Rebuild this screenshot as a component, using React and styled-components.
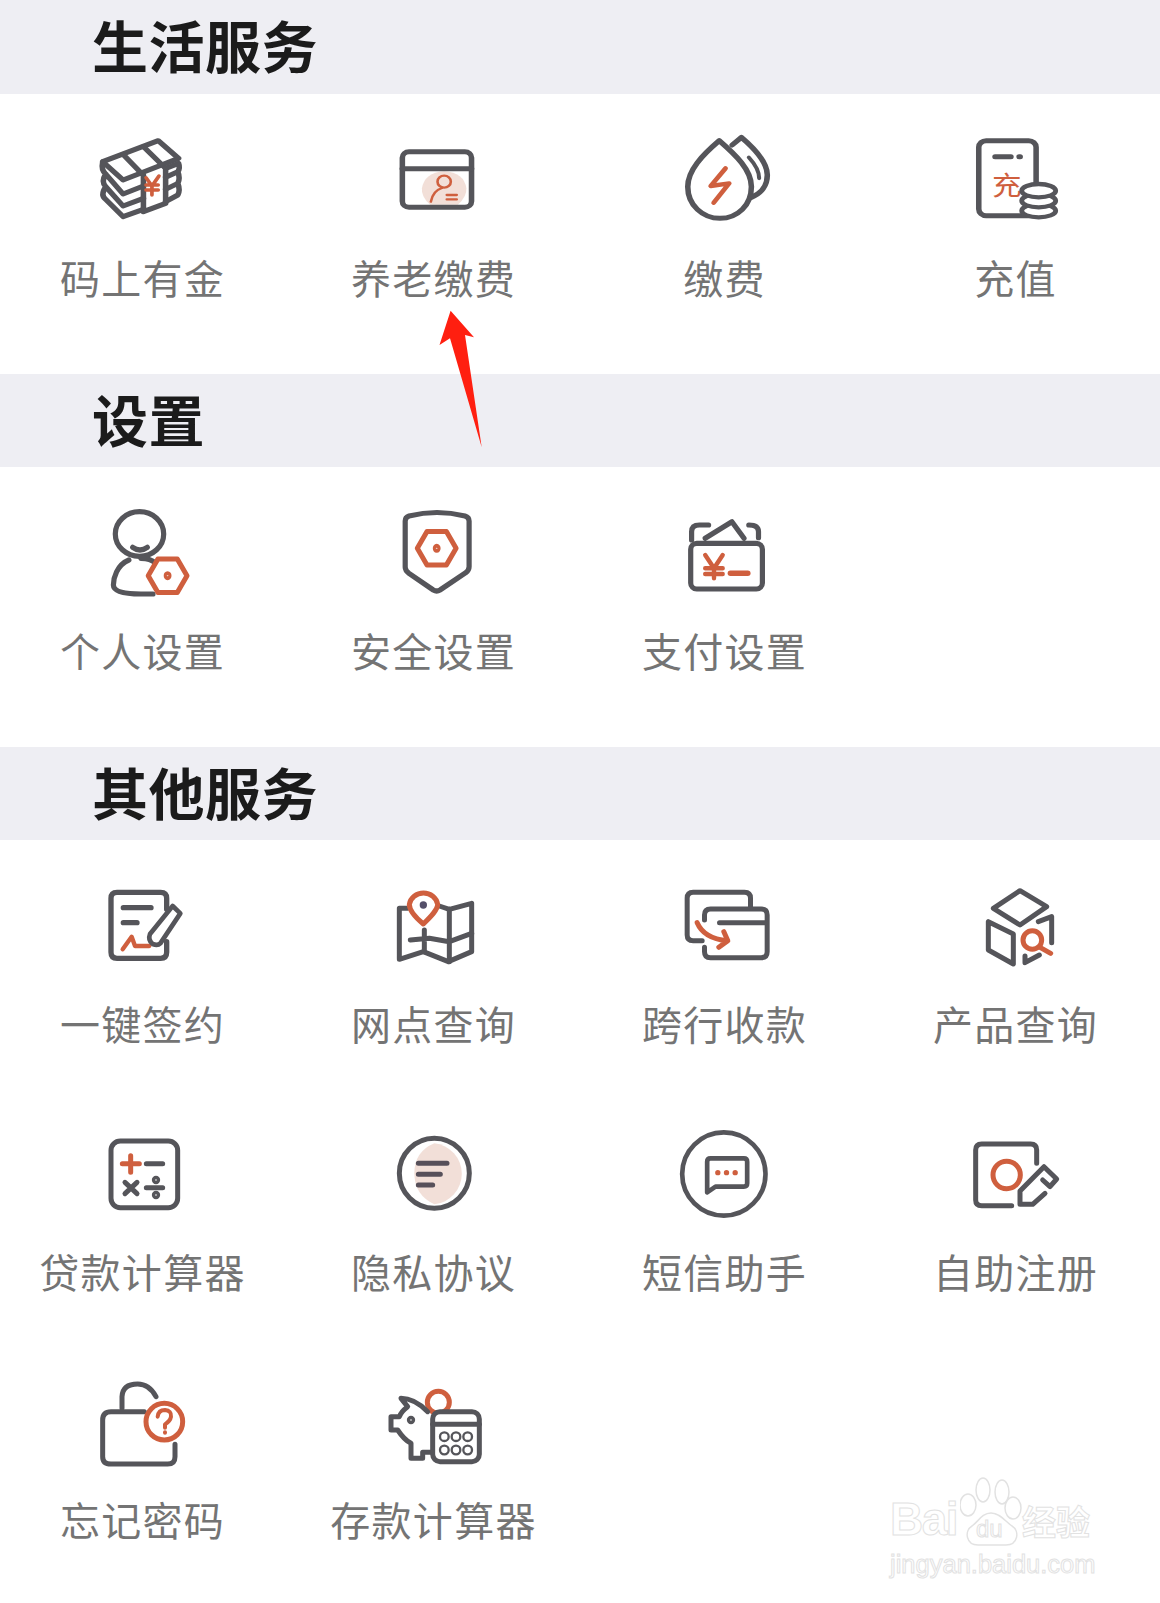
import React from 'react'
import styled, { createGlobalStyle } from 'styled-components'

const GRAY = '#55555a'
const ORANGE = '#cf5f3e'
const PALE = '#f2dfd8'

const GlobalStyle = createGlobalStyle`
    html, body {
        margin: 0;
        padding: 0;
        background: #fff;
    }
`

const Page = styled.div`
    position: relative;
    width: 1160px;
    height: 1603px;
    overflow: hidden;
    background: #fff;
    font-family: "Noto Sans CJK SC", "Noto Sans", sans-serif;
`

const SectionHeader = styled.div`
    box-sizing: border-box;
    height: ${props => props.$height}px;
    padding: 0 0 6px 92px;
    display: flex;
    align-items: center;
    background: #eeeef3;
`

const Title = styled.h2`
    margin: 0;
    font-size: 56px;
    letter-spacing: 0.5px;
    line-height: 1;
    font-weight: 700;
    color: #1b1b1b;
`

const Grid = styled.div`
    display: grid;
    grid-template-columns: repeat(4, 291px);
    grid-auto-rows: 248px;
    margin-left: -3px;
    padding-bottom: ${props => props.$bottom}px;
`

const Item = styled.div`
    display: flex;
    flex-direction: column;
    align-items: center;
    padding-top: 34px;
`

const IconBox = styled.svg`
    display: block;
    width: 100px;
    height: 100px;
    fill: none;
    stroke: ${GRAY};
    stroke-linecap: round;
    stroke-linejoin: round;
`

const Label = styled.span`
    margin-top: 29px;
    font-size: 40px;
    line-height: 40px;
    letter-spacing: 1.3px;
    font-weight: 400;
    color: #747474;
    white-space: nowrap;
`

const ArrowMark = styled.svg`
    position: absolute;
    left: 430px;
    top: 305px;
    width: 60px;
    height: 150px;
`

const Watermark = styled.div`
    position: absolute;
    left: 890px;
    top: 1476px;
    width: 210px;
    color: #fff;
    -webkit-text-stroke: 1px #e2e2e2;
    font-family: "Liberation Sans", sans-serif;
`

const MarkRow = styled.div`
    display: flex;
    align-items: flex-end;
    height: 70px;
`

const MarkLatin = styled.span`
    width: 70px;
    font-size: 46px;
    letter-spacing: -1.5px;
    line-height: 54px;
    font-weight: 700;
`

const Paw = styled.svg`
    width: 62px;
    height: 70px;
    fill: #fff;
    stroke: #e2e2e2;
    stroke-width: 1.5;
`

const MarkCjk = styled.span`
    font-family: "Noto Sans CJK SC", sans-serif;
    font-size: 34px;
    line-height: 50px;
    font-weight: 700;
`

const MarkUrl = styled.div`
    font-size: 25.5px;
    line-height: 32px;
    margin-top: 2px;
    white-space: nowrap;
`

// icons are traced in the coordinates of the zoomed crops, so vb just picks the window
const Icon = ({ vb, sw, children }) => (
    <IconBox viewBox={vb} strokeWidth={sw} preserveAspectRatio="none">{children}</IconBox>
)

const Money = () => (
    <Icon vb="248.7 84 270.3 300" sw={15}>
        <path d="M275 185 L425 122 L480 175 L330 240 Z" />
        <path d="M330 163 L385 226 M385 140 L445 205 M385 226 V335 M445 205 V310 M385 335 L445 310" />
        <path d="M275 185 Q270 210 283 222 L330 282 L385 258 M283 222 Q270 245 283 260 L330 318 L385 295 M283 260 Q268 285 283 298 L330 350 L385 328" />
        <path d="M445 205 L480 190 Q485 205 478 215 L445 232 M478 215 Q485 235 478 250 L445 268 M478 250 Q485 270 478 285 L445 305" />
        <path stroke={ORANGE} strokeWidth="10" d="M392 233 L408 258 L427 228 M408 258 V285 M392 255 H425 M392 270 H425" />
    </Icon>
)

const PensionCard = () => (
    <Icon vb="1035.4 84 270.3 300" sw={15}>
        <path stroke="none" fill={PALE} d="M1160 314 Q1135 290 1138 265 Q1145 218 1198 214 Q1252 218 1258 265 Q1260 290 1235 314 Z" />
        <rect x="1085" y="155" width="187" height="167" rx="18" />
        <path d="M1085 206 H1272" />
        <g stroke={ORANGE} strokeWidth="7">
            <circle cx="1198" cy="245" r="18" />
            <path d="M1162 305 Q1168 272 1192 264" />
            <path d="M1205 285 H1232 M1205 298 H1232" />
        </g>
    </Icon>
)

const Drops = () => (
    <Icon vb="255.5 84 270.3 300" sw={15}>
        <path d="M375 122 C330 165 290 210 290 260 C290 315 330 355 377 355 C425 355 462 315 462 260 C462 210 420 165 375 122 Z" />
        <path d="M410 135 L435 112 C470 145 505 185 505 225 C505 255 490 280 462 292" />
        <path d="M455 172 C470 190 483 210 483 235" strokeWidth="11" />
        <path stroke={ORANGE} strokeWidth="13" d="M392 205 L352 258 L402 250 L360 308" />
    </Icon>
)

const Recharge = () => (
    <Icon vb="1043.5 84 270.3 300" sw={15}>
        <rect x="1078" y="122" width="155" height="225" rx="20" />
        <path d="M1122 170 H1165 M1187 170 H1190" />
        <text x="1114" y="284" fontSize="80" fill={ORANGE} stroke="none" fontFamily="'Noto Sans CJK SC', sans-serif">充</text>
        <g fill="#fff" strokeWidth="13">
            <ellipse cx="1240" cy="332" rx="46" ry="20" />
            <ellipse cx="1240" cy="302" rx="46" ry="20" />
            <ellipse cx="1240" cy="272" rx="46" ry="20" />
        </g>
    </Icon>
)

const HexNut = ({ cx, cy }) => (
    <g stroke={ORANGE} strokeWidth="5" fill="#fff">
        <path d={`M${cx - 9.7} ${cy - 16.8} H${cx + 9.7} L${cx + 19.4} ${cy} L${cx + 9.7} ${cy + 16.8} H${cx - 9.7} L${cx - 19.4} ${cy} Z`} />
        <ellipse cx={cx} cy={cy} rx="1.4" ry="2" />
    </g>
)

const PersonSetting = () => (
    <Icon vb="0 0 100 100" sw={5.2}>
        <ellipse cx="46.5" cy="33" rx="24.2" ry="22.3" />
        <path d="M39.7 46.3 Q47 51.7 54.3 46.3" />
        <path d="M35.9 59 C23.7 64 20.4 77.3 20.4 84 C20.4 90.7 31 93 48 93 H60 M48 57.3 Q57.7 57.3 62.5 62.3" />
        <HexNut cx={74.6} cy={74.7} />
    </Icon>
)

const Shield = () => (
    <Icon vb="0 0 100 100" sw={5.2}>
        <path d="M21.2 20 Q21.2 16.3 25 15 Q53 8 81 15 Q85.1 16.3 85.1 20 V65.7 Q85.1 69 81.8 71.7 L56 89 Q52.7 91 49.3 89 L25 72.3 Q21.2 69.5 21.2 66.3 Z" />
        <HexNut cx={52.7} cy={47.3} />
    </Icon>
)

const Wallet = () => (
    <Icon vb="0 0 100 100" sw={5.2}>
        <rect x="15.7" y="42.3" width="71.7" height="45.7" rx="6" />
        <path d="M33.6 24 H24.4 Q16.6 24 16.6 30.7 V39 M30.2 37.3 L56.9 20.7 L69 37.3 M73.8 24 Q83.5 24 83.5 30.7 V36.7" />
        <path stroke={ORANGE} strokeWidth="4.4" d="M30.2 54 L39 67.3 L47.7 54 M39 67.3 V77.3 M30.2 67.3 H47.7 M30.2 73 H47.7" />
        <path stroke={ORANGE} strokeWidth="5.5" d="M55.4 72.3 H72.8" />
    </Icon>
)

const Sign = () => (
    <Icon vb="96 12 300 300" sw={16}>
        <path d="M317 118 V85 Q317 67 299 67 H168 Q150 67 150 85 V247 Q150 265 168 265 H299 Q317 265 317 247 V215" />
        <path d="M187 113 H270 M187 158 H228" />
        <path stroke={ORANGE} strokeWidth="13" d="M185 238 L212 200 L222 228 L265 228" />
        <path strokeWidth="14" d="M335 108 L358 130 L298 220 Q290 228 275 222 Q260 210 267 192 Z" />
    </Icon>
)

const MapPin = () => (
    <Icon vb="969 12 300 300" sw={15}>
        <path d="M1040 115 H1015 V268 L1087 245 L1162 275 L1232 245 V100 L1165 118 L1135 108" />
        <path d="M1165 118 V275 M1090 180 V245 M1048 210 L1105 205 L1165 215 L1232 190" />
        <path stroke={ORANGE} d="M1087 162 C1060 140 1045 120 1045 103 A43 40 0 0 1 1130 103 C1130 120 1110 140 1087 162 Z" />
        <circle cx="1087" cy="105" r="11" fill="#55506a" stroke="none" />
    </Icon>
)

const Transfer = () => (
    <Icon vb="103.5 12 300 300" sw={15}>
        <path d="M330 110 V85 Q330 67 312 67 H158 Q140 67 140 85 V195 Q140 212 158 212 H185" />
        <path d="M192 232 V245 Q192 263 210 263 H362 Q380 263 380 245 V135 Q380 117 362 117 H210 Q192 117 192 135 V150" />
        <path d="M237 158 H375" />
        <path stroke={ORANGE} d="M170 158 Q190 205 260 212 M250 185 L262 212 L235 232" />
    </Icon>
)

const BoxSearch = () => (
    <Icon vb="978 12 300 300" sw={15}>
        <path d="M1140 62 L1220 110 L1140 165 L1060 115 Z" />
        <path d="M1045 155 V240 L1120 282 V192 Z" />
        <path d="M1195 155 L1235 140 V218 M1155 258 V278 L1198 255" />
        <g stroke={ORANGE}>
            <circle cx="1177" cy="210" r="28" />
            <path d="M1200 232 L1232 250" />
        </g>
    </Icon>
)

const Calculator = () => (
    <Icon vb="96 21 300 300" sw={15}>
        <rect x="150" y="78" width="200" height="200" rx="28" />
        <path stroke={ORANGE} d="M184 146 H235 M209 122 V172" />
        <path d="M256 146 H305 M192 202 L228 236 M228 202 L192 236 M256 218 H305" />
        <circle cx="285" cy="195" r="5" />
        <circle cx="285" cy="240" r="5" />
    </Icon>
)

const Privacy = () => (
    <Icon vb="969 21 300 300" sw={15}>
        <path stroke="none" fill={PALE} d="M1120 85 A92 92 0 0 1 1120 268 Q1060 240 1060 175 Q1060 110 1120 85 Z" />
        <circle cx="1120" cy="175" r="105" />
        <path stroke="#57505a" d="M1072 145 H1158 M1072 178 H1138 M1072 210 H1115" />
    </Icon>
)

const Sms = () => (
    <Icon vb="103.5 21 300 300" sw={14}>
        <circle cx="250" cy="177" r="125" />
        <path d="M210 130 H310 Q320 130 320 140 V205 Q320 215 310 215 H225 L200 232 V140 Q200 130 210 130 Z" />
        <g fill={ORANGE} stroke="none">
            <circle cx="232" cy="173" r="8" />
            <circle cx="258" cy="173" r="8" />
            <circle cx="284" cy="173" r="8" />
        </g>
    </Icon>
)

const Register = () => (
    <Icon vb="978 21 300 300" sw={15}>
        <path d="M1190 145 V105 Q1190 87 1172 87 H1025 Q1007 87 1007 105 V255 Q1007 272 1025 272 H1115" />
        <circle cx="1100" cy="180" r="41" stroke={ORANGE} />
        <path d="M1208 195 L1230 215 L1250 192 L1212 155 L1140 228 V268 H1178 L1215 235" />
    </Icon>
)

const Forgot = () => (
    <Icon vb="96 15 300 300" sw={15}>
        <path d="M183 130 V95 Q185 57 230 57 Q265 57 285 95" />
        <path d="M250 140 H150 Q125 140 125 165 V275 Q125 297 150 297 H320 Q342 297 342 275 V238" />
        <circle cx="310" cy="170" r="55" stroke={ORANGE} />
        <path stroke={ORANGE} strokeWidth="12" d="M290 155 Q292 135 312 135 Q332 137 330 155 Q328 168 312 178 V188 M312 202 V203" />
    </Icon>
)

const Piggy = () => (
    <Icon vb="969 15 300 300" sw={15}>
        <circle cx="1132" cy="112" r="33" stroke={ORANGE} />
        <path d="M1100 140 Q1060 100 1020 100 L1040 125 Q1020 140 1015 155 H990 V195 H1010 Q1030 225 1050 235 V280 H1085 V262 H1110" />
        <circle cx="1050" cy="165" r="5" />
        <rect x="1115" y="140" width="140" height="150" rx="22" fill="#fff" />
        <path d="M1115 178 H1255" />
        <g strokeWidth="7">
            {[1150, 1185, 1220].map(cx => (
                <React.Fragment key={cx}>
                    <circle cx={cx} cy="215" r="13" />
                    <circle cx={cx} cy="255" r="13" />
                </React.Fragment>
            ))}
        </g>
    </Icon>
)

const sections = [
    {
        title: '生活服务',
        height: 94,
        bottom: 32,
        items: [
            { label: '码上有金', icon: Money },
            { label: '养老缴费', icon: PensionCard },
            { label: '缴费', icon: Drops },
            { label: '充值', icon: Recharge },
        ],
    },
    {
        title: '设置',
        height: 93,
        bottom: 32,
        items: [
            { label: '个人设置', icon: PersonSetting },
            { label: '安全设置', icon: Shield },
            { label: '支付设置', icon: Wallet },
        ],
    },
    {
        title: '其他服务',
        height: 93,
        bottom: 0,
        items: [
            { label: '一键签约', icon: Sign },
            { label: '网点查询', icon: MapPin },
            { label: '跨行收款', icon: Transfer },
            { label: '产品查询', icon: BoxSearch },
            { label: '贷款计算器', icon: Calculator },
            { label: '隐私协议', icon: Privacy },
            { label: '短信助手', icon: Sms },
            { label: '自助注册', icon: Register },
            { label: '忘记密码', icon: Forgot },
            { label: '存款计算器', icon: Piggy },
        ],
    },
]

const App = () => {
    return (
        <Page>
            <GlobalStyle />
            {sections.map(section => (
                <section key={section.title}>
                    <SectionHeader $height={section.height}>
                        <Title>{section.title}</Title>
                    </SectionHeader>
                    <Grid $bottom={section.bottom}>
                        {section.items.map(item => (
                            <Item key={item.label}>
                                <item.icon />
                                <Label>{item.label}</Label>
                            </Item>
                        ))}
                    </Grid>
                </section>
            ))}
            <ArrowMark viewBox="430 305 60 150">
                <path fill="#ff1f10" d="M450.6 310.7 L474 337.3 L465 335 L481.7 447.3 L450 338.3 L439.5 345 Z" />
            </ArrowMark>
            <Watermark>
                <MarkRow>
                    <MarkLatin>Bai</MarkLatin>
                    <Paw viewBox="0 0 62 70">
                        <ellipse cx="8" cy="29" rx="8" ry="11" />
                        <ellipse cx="23" cy="14" rx="7" ry="12" />
                        <ellipse cx="42" cy="16" rx="7" ry="12" />
                        <ellipse cx="53" cy="32" rx="8" ry="11" />
                        <path d="M31 37 C22 37 18 46 12 50 C4 55 6 69 18 69 H46 C58 69 60 55 52 50 C46 46 40 37 31 37 Z" />
                        <text x="16" y="61" fontSize="24" fontFamily="'Liberation Sans', sans-serif" strokeWidth="1">du</text>
                    </Paw>
                    <MarkCjk>经验</MarkCjk>
                </MarkRow>
                <MarkUrl>jingyan.baidu.com</MarkUrl>
            </Watermark>
        </Page>
    )
}

export default App
